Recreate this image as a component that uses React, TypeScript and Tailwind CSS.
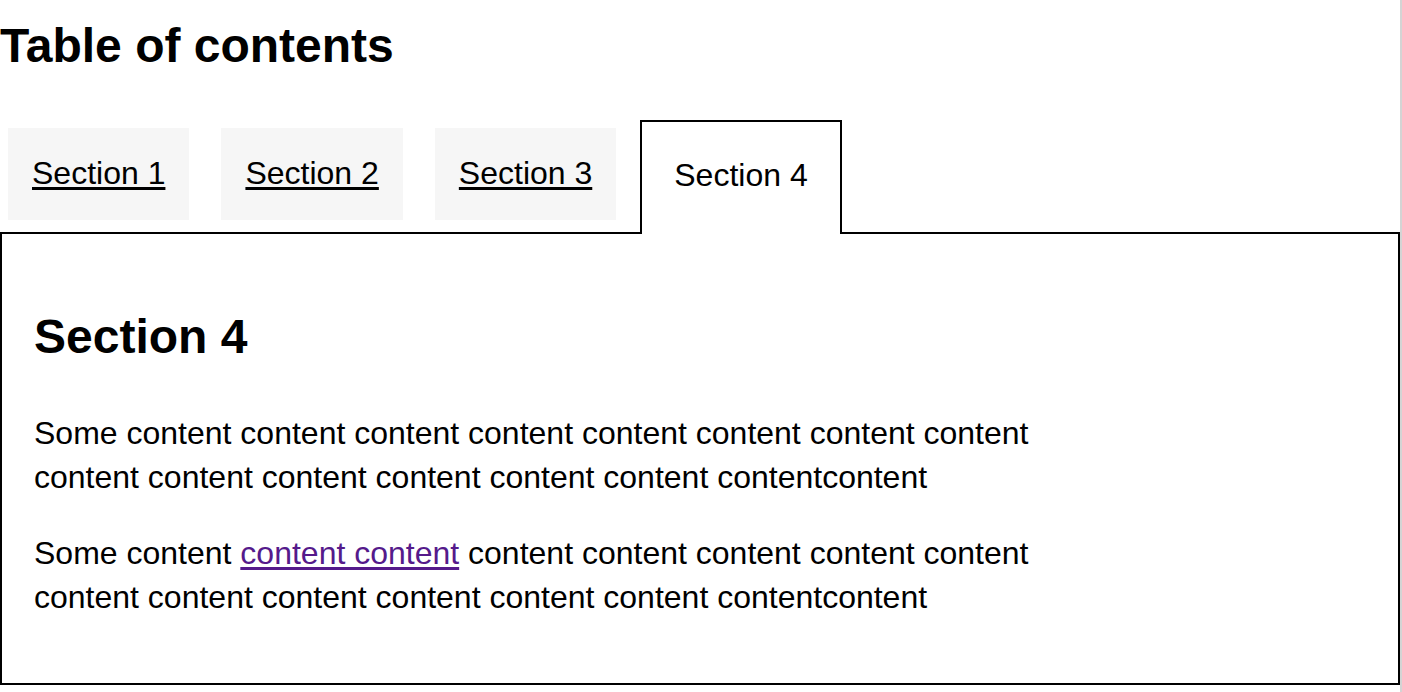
const tabs = ["Section 1", "Section 2", "Section 3", "Section 4"];

export default function App() {
  const active = 3;

  return (
    <div className="min-h-screen border-r-2 border-[#d4d4d4] bg-white font-['Liberation_Sans',Arial,sans-serif] text-black">
      <h1 className="pt-[18px] text-[48px] font-bold leading-[55px]">Table of contents</h1>

      {/* Tabs */}
      <ul className="mt-[47px] flex items-start gap-4">
        {tabs.map((t, i) =>
          i === active ? (
            <li
              key={t}
              className="relative z-10 -mb-[2px] h-[114px] border-2 border-b-0 border-black bg-white px-8 pt-[35px] text-[32px] leading-[37px]"
            >
              {t}
            </li>
          ) : (
            <li key={t} className="p-2">
              <a
                href="#"
                className="flex h-[92px] items-center bg-[#f6f6f6] px-6 pb-[2px] text-[32px] leading-[37px] text-black underline underline-offset-[3px]"
              >
                {t}
              </a>
            </li>
          )
        )}
      </ul>

      {/* Panel */}
      <div className="border-2 border-black px-8 pt-8 pb-8 text-[32px] leading-[44px]">
        <h2 className="mt-[43px] mb-[46px] text-[48px] font-bold leading-[56px]">Section 4</h2>
        <p className="mb-8 max-w-[1040px]">
          Some content content content content content content content content content content content
          content content content contentcontent
        </p>
        <p className="mb-8 max-w-[1040px]">
          Some content{" "}
          <a href="#" className="text-[#551a8b] underline underline-offset-[3px]">
            content content
          </a>{" "}
          content content content content content content content content content content content
          contentcontent
        </p>
      </div>
    </div>
  );
}
